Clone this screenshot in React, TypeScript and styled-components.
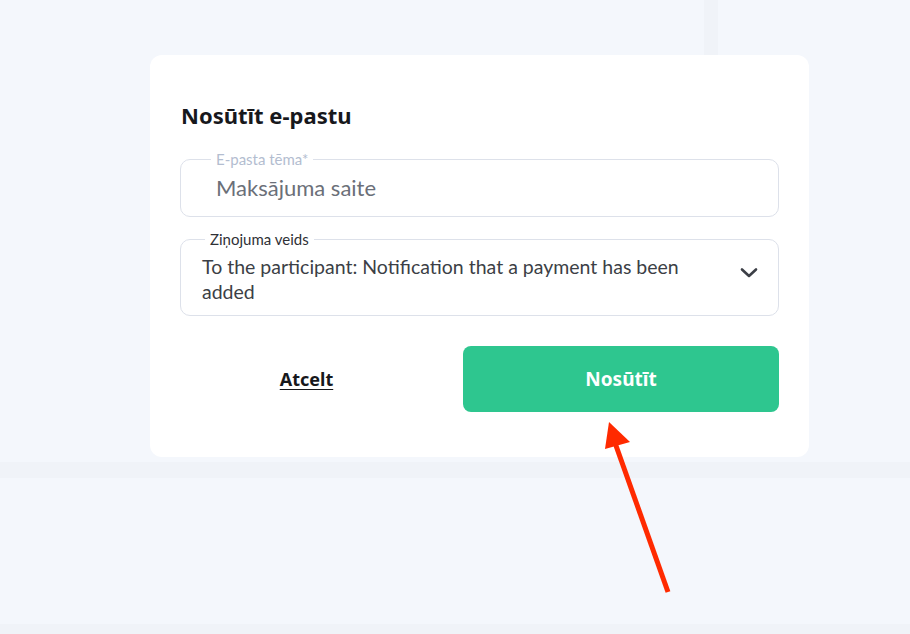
import React from "react";
import styled, { createGlobalStyle } from "styled-components";

const Global = createGlobalStyle`
  html, body { margin: 0; padding: 0; }
  body { background: #f4f7fc; }
  * { box-sizing: border-box; }
`;

const Page = styled.div`
  position: relative;
  width: 910px;
  height: 634px;
  overflow: hidden;
  padding: 55px 0 0 150px;
  background:
    linear-gradient(#f0f3f8, #f0f3f8) 704px 0 / 14px 55px no-repeat,
    linear-gradient(#f0f3f8, #f0f3f8) 0 462px / 100% 16px no-repeat,
    linear-gradient(#f0f3f8, #f0f3f8) 0 624px / 100% 10px no-repeat,
    #f4f7fc;
`;

const Card = styled.div`
  width: 659px;
  height: 402px;
  background: #ffffff;
  border-radius: 12px;
  padding: 45px 30px 45px 30px;
  display: flex;
  flex-direction: column;
`;

const Title = styled.h2`
  margin: 0 0 20px 1px;
  font-family: "Noto Sans", "Open Sans", sans-serif;
  font-weight: 700;
  font-size: 22px;
  line-height: 30px;
  color: #17181c;
`;

const Field = styled.fieldset<{ $gap: number }>`
  margin: 0 0 ${(p) => p.$gap}px 0;
  padding: 0;
  min-width: 0;
  border: 1px solid #dde1ea;
  border-radius: 10px;
`;

const Legend = styled.legend<{ $offset: number; $muted?: boolean }>`
  margin-left: ${(p) => p.$offset}px;
  padding: 0 5px;
  font-family: Lato, "Noto Sans", sans-serif;
  font-size: 15px;
  line-height: 18px;
  color: ${(p) => (p.$muted ? "#b3bdd0" : "#2f3136")};
`;

const Value = styled.div`
  padding: 7px 20px 15px 35px;
  font-family: Lato, "Noto Sans", sans-serif;
  font-size: 22px;
  line-height: 26px;
  color: #6b6f78;
`;

const SelectRow = styled.div`
  display: flex;
  align-items: flex-start;
  padding: 6px 20px 11px 21px;
`;

const SelectText = styled.div`
  flex: 1;
  font-family: Lato, "Noto Sans", sans-serif;
  font-size: 19.5px;
  line-height: 25px;
  color: #3c3f46;
  padding-right: 40px;
`;

const Chevron = styled.svg`
  margin-top: 13px;
  flex: none;
`;

const Actions = styled.div`
  margin-top: 30px;
  display: flex;
  align-items: center;
`;

const Cancel = styled.button`
  flex: 1;
  padding: 0 30px 0 0;
  border: none;
  background: none;
  font-family: "Noto Sans", "Open Sans", sans-serif;
  font-weight: 700;
  font-size: 18px;
  color: #17181c;
  text-decoration: underline;
  text-underline-offset: 3px;
  cursor: pointer;
`;

const Submit = styled.button`
  width: 316px;
  height: 66px;
  border: none;
  border-radius: 8px;
  background: #2ec68f;
  color: #ffffff;
  font-family: "Noto Sans", "Open Sans", sans-serif;
  font-weight: 700;
  font-size: 19px;
  cursor: pointer;
`;

const ArrowOverlay = styled.svg`
  position: absolute;
  left: 0;
  top: 0;
  pointer-events: none;
`;

export default function App() {
  return (
    <>
      <Global />
      <Page>
        <Card>
          <Title>Nosūtīt e-pastu</Title>
          <Field $gap={13}>
            <Legend $offset={30} $muted>
              E-pasta tēma*
            </Legend>
            <Value>Maksājuma saite</Value>
          </Field>
          <Field $gap={0}>
            <Legend $offset={24}>Ziņojuma veids</Legend>
            <SelectRow>
              <SelectText>
                To the participant: Notification that a payment has been added
              </SelectText>
              <Chevron width="18" height="12" viewBox="0 0 18 12">
                <path
                  d="M2 2.5 L9 9 L16 2.5"
                  fill="none"
                  stroke="#3c3f46"
                  strokeWidth="2.6"
                  strokeLinecap="round"
                  strokeLinejoin="round"
                />
              </Chevron>
            </SelectRow>
          </Field>
          <Actions>
            <Cancel>Atcelt</Cancel>
            <Submit>Nosūtīt</Submit>
          </Actions>
        </Card>
        <ArrowOverlay width="910" height="634" viewBox="0 0 910 634">
          <line x1="668" y1="592" x2="614" y2="440" stroke="#ff2a00" strokeWidth="5" />
          <polygon points="609,422 605,449 630,442" fill="#ff2a00" />
        </ArrowOverlay>
      </Page>
    </>
  );
}
